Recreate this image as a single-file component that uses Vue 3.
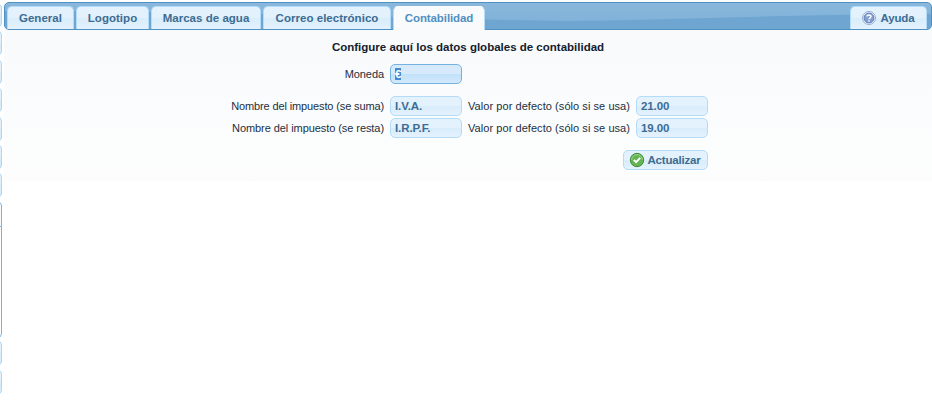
<script setup>
const tabs = [
  { name: 'General', width: 67 },
  { name: 'Logotipo', width: 73 },
  { name: 'Marcas de agua', width: 110 },
  { name: 'Correo electrónico', width: 128 },
  { name: 'Contabilidad', width: 92, active: true },
]
const taxes = [
  { label: 'Nombre del impuesto (se suma)', name: 'I.V.A.', value: '21.00', tight: true },
  { label: 'Nombre del impuesto (se resta)', name: 'I.R.P.F.', value: '19.00' },
]
</script>

<template>
  <div class="page">
    <aside class="side">
      <i class="first"></i>
      <i v-for="n in 6" :key="n"></i>
      <i class="open"></i>
      <i class="content"></i>
      <i></i>
      <i></i>
    </aside>
    <main class="panel">
      <nav class="bar">
        <svg class="wave" viewBox="0 0 926 26" preserveAspectRatio="none">
          <path d="M0 8 C150 8 350 13 475 16 C600 22 700 12 926 11 V26 H0Z" fill="#6ea6d1" />
        </svg>
        <a v-for="t in tabs" :key="t.name" class="tab" :class="{ active: t.active }" :style="{ width: t.width + 'px' }"><span>{{ t.name }}</span></a>
        <a class="tab help">
          <svg width="16" height="16" viewBox="0 0 16 16">
            <circle cx="8" cy="8" r="6.5" fill="#eef4fc" stroke="#94abd4" />
            <circle cx="8" cy="8" r="4.9" fill="#84a0d0" stroke="#5d80bd" />
            <path d="M6 6.6C6 4.5 10 4.5 10 6.6C10 7.8 8 7.9 8 9.3M8 10.3V11.7" fill="none" stroke="#fff" stroke-width="1.4" />
          </svg>
          <span>Ayuda</span>
        </a>
      </nav>
      <section class="form">
        <h1><span>Configure aquí los datos globales de contabilidad</span></h1>
        <div class="row currency">
          <label class="name">Moneda</label>
          <div class="field focus"><mark>€</mark></div>
        </div>
        <div v-for="t in taxes" :key="t.name" class="row">
          <label class="name" :class="{ tight: t.tight }">{{ t.label }}</label>
          <div class="field">{{ t.name }}</div>
          <label class="default">Valor por defecto (sólo si se usa)</label>
          <div class="field">{{ t.value }}</div>
        </div>
        <button>
          <svg width="16" height="16" viewBox="0 0 16 16">
            <circle cx="8" cy="8" r="6.7" fill="#65b454" stroke="#408b3b" />
            <path d="M2.6 8A5.4 5.4 0 0 1 13.4 8" fill="none" stroke="#9bd38c" />
            <path d="M4.8 7.8L7.1 10.1L11.2 5.8" fill="none" stroke="#fff" stroke-width="1.9" />
          </svg>
          <span>Actualizar</span>
        </button>
      </section>
    </main>
  </div>
</template>

<style>
body { background: #fff; }
</style>
<style scoped>
* { box-sizing: border-box; }
.page { display: flex; height: 407px; overflow: hidden; font: 11px "Liberation Sans", Arial, sans-serif; color: #222f3e; }
.side { width: 4px; padding-top: 3px; flex: none; }
.side i { display: block; width: 12px; height: 26px; margin: 0 0 2.4px -10px; border: 1px solid #aed7f4; border-radius: 5px; background: linear-gradient(#e4f1fb 50%, #d7ebf9 50%); }
.side i.first { height: 25px; }
.side i.open { height: 26px; margin-bottom: 0; border-color: #74b2e2; border-radius: 5px 5px 0 0; background: #f8fafc; }
.side i.content { height: 111px; border-color: #74b2e2; border-top: 0; border-radius: 0 0 5px 5px; background: #fff; }
.panel { width: 928px; height: 181px; padding-top: 2px; background: linear-gradient(#fff 2px, #f8fafc 2px, #f8fafc 45px, #fcfdfd 155px, #fcfcfc); }
.bar { position: relative; height: 28px; display: flex; gap: 2px; align-items: flex-end; padding: 0 4px 0 2px; border: 1px solid #4f91c2; border-radius: 5px; background: linear-gradient(#8ab8dc, #7dafd7); }
.wave { position: absolute; inset: 0; width: 100%; height: 100%; border-radius: 4px; }
.tab { position: relative; flex: none; height: 23px; display: flex; align-items: center; justify-content: center; border: 1px solid #b2dcf8; border-bottom: 0; border-radius: 5px 5px 0 0; background: linear-gradient(#e4f2fd 0, #e2f1fc 50%, #d8ecfb 50%, #e4f2fd); color: #3d6c92; font-size: 11.5px; font-weight: bold; letter-spacing: .03px; white-space: nowrap; }
.tab.active { height: 24px; margin-bottom: -1px; padding-bottom: 1px; color: #528fc1; background: #f8fafc; border-color: #f8fafc #b2dcf8; letter-spacing: -.1px; }
.help { width: 77px; margin-left: auto; padding-right: 1px; gap: 3px; letter-spacing: -.1px; }
.form { display: flex; flex-direction: column; }
h1 { height: 34px; margin: 0; display: flex; justify-content: center; align-items: center; font-size: 11.5px; line-height: 14px; color: #15202d; }
.row { display: flex; align-items: center; height: 20px; margin-bottom: 2px; }
.currency { margin-bottom: 12px; }
.name { width: 380px; margin-right: 6px; text-align: right; letter-spacing: -.07px; }
.name.tight { letter-spacing: -.13px; }
.default { width: 162px; margin: 0 6px; text-align: right; letter-spacing: .06px; white-space: nowrap; }
.field { width: 72px; height: 20px; padding: 0 4px; border: 1px solid #b2dcf8; border-radius: 5px; line-height: 18px; color: #3d6c92; font-size: 11.5px; font-weight: bold; letter-spacing: -.1px; background: linear-gradient(#e4f2fd 50%, #d8ecfb 50%, #e4f2fd); }
.focus { border-color: #74b2e2; background: linear-gradient(#d6eafb 50%, #bfe0fa 50%, #d3e9fc); }
mark { display: inline-block; height: 12px; line-height: 12px; color: #fff; background: #458bd4; vertical-align: middle; margin-top: -2px; letter-spacing: 0; }
button { width: 85px; height: 20px; margin: 10px 0 0 619px; display: flex; align-items: center; justify-content: center; gap: 3px; padding: 0 2px 0 0; border: 1px solid #b2dcf8; border-radius: 5px; background: linear-gradient(#e4f2fd 50%, #d8ecfb 50%, #e4f2fd); font: bold 11.5px "Liberation Sans", Arial, sans-serif; letter-spacing: -.2px; color: #3d6c92; }
</style>
